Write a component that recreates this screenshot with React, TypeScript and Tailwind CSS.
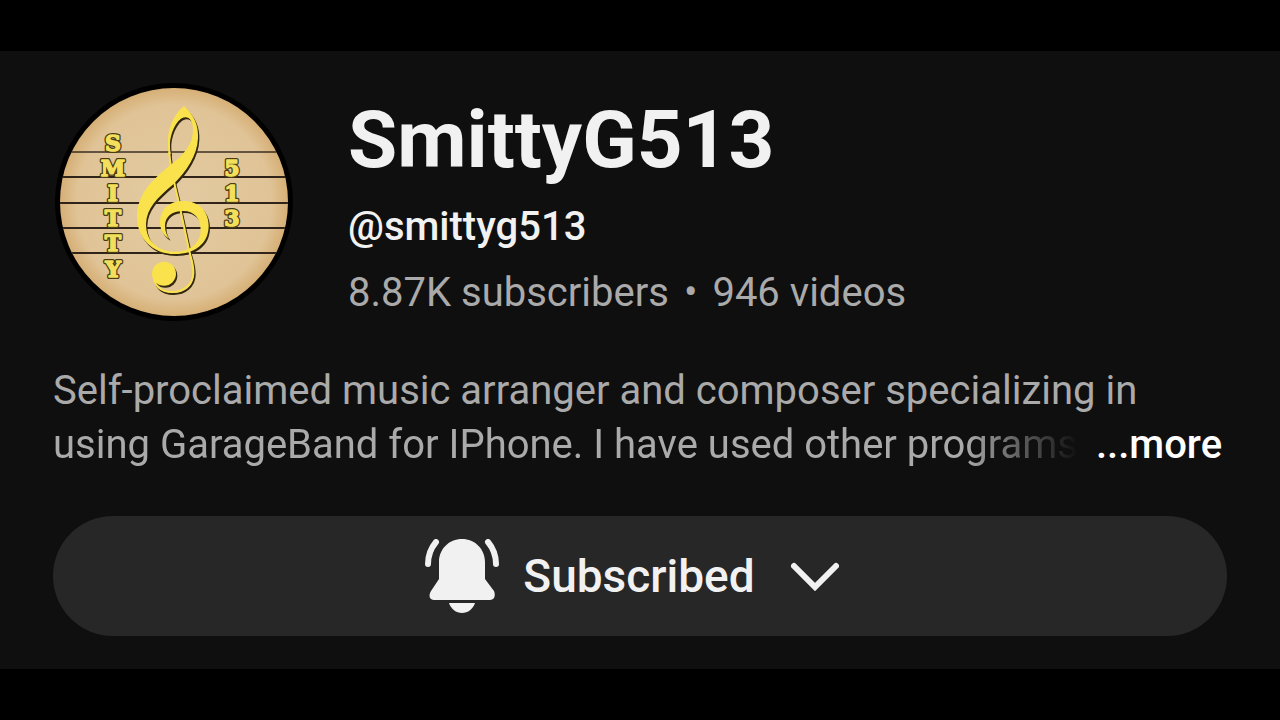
import { ReactNode } from "react";

const staffLines = [70, 95, 121, 146, 171];

const nameLetters = [
  { char: "S", y: 69 },
  { char: "M", y: 94 },
  { char: "I", y: 119 },
  { char: "T", y: 144 },
  { char: "T", y: 169 },
  { char: "Y", y: 195 },
];

const numberLetters = [
  { char: "5", y: 94 },
  { char: "1", y: 119 },
  { char: "3", y: 144 },
];

function Clef() {
  return (
    <>
      <path
        stroke="none"
        d="M432 108 C462 136 476 165 474 205 C472 255 440 305 400 343 C350 385 320 415 318 462 C318 515 355 545 405 545 C455 545 482 515 482 480 C482 445 462 423 430 423 C395 423 375 440 375 468 C375 485 381 497 388 506 C368 496 359 475 360 452 C362 415 390 393 430 393 C478 393 506 425 506 467 C506 520 465 552 405 552 C335 552 291 502 291 440 C291 375 335 330 385 290 C430 255 459 225 459 180 C459 155 450 142 436 142 C412 142 390 190 390 225 C390 238 391 245 392 252 L386 252 C384 235 383 220 384 205 C387 165 405 130 432 108 Z"
      />
      <path
        fill="none"
        strokeWidth="6"
        d="M388 245 C389 285 404 345 416 395 L446 535 C452 565 461 580 460 610 C459 645 430 666 397 666 C360 666 341 645 341 615"
      />
      <circle cx="372" cy="611" r="36" stroke="none" />
    </>
  );
}

function Letter({ x, y, char }: { x: number; y: number; char: string }) {
  return (
    <>
      <text x={x} y={y} stroke="#4a3d14" strokeWidth="4">
        {char}
      </text>
      <text x={x} y={y} fill="#f2df5c" stroke="#f2df5c" strokeWidth="1.5">
        {char}
      </text>
    </>
  );
}

function Avatar() {
  return (
    <svg viewBox="0 0 240 240" className="size-60 shrink-0" role="img" aria-label="SmittyG513">
      <defs>
        <radialGradient id="paper">
          <stop offset="0" stopColor="#e3caa1" />
          <stop offset="0.85" stopColor="#e0c497" />
          <stop offset="1" stopColor="#d6af76" />
        </radialGradient>
        <clipPath id="disc">
          <circle cx="121" cy="120" r="114" />
        </clipPath>
      </defs>
      <circle cx="121" cy="120" r="119" fill="#000" />
      <circle cx="121" cy="120" r="114" fill="url(#paper)" />
      <g clipPath="url(#disc)" stroke="#30241a" strokeWidth="2">
        {staffLines.map((y, i) => (
          <path key={y} d={`M0 ${y}H240`} opacity={i === 0 ? 0.7 : 1} />
        ))}
      </g>
      <g transform="translate(-13 -12) scale(0.33333)">
        <g transform="translate(4 6)" fill="#32270f" stroke="#32270f">
          <Clef />
        </g>
        <g fill="#fae24c" stroke="#fae24c">
          <Clef />
        </g>
      </g>
      <g className="font-['DejaVu_Serif',serif] text-[22px] font-bold" textAnchor="middle" strokeLinejoin="round">
        {nameLetters.map(({ char, y }) => (
          <Letter key={y} x={60} y={y} char={char} />
        ))}
        {numberLetters.map(({ char, y }) => (
          <Letter key={y} x={179} y={y} char={char} />
        ))}
      </g>
    </svg>
  );
}

function BellIcon() {
  return (
    <svg viewBox="0 0 74 74" className="size-[74px]" fill="currentColor" aria-hidden="true">
      <path d="M37 0 C24 0 14 10 14 23 V40 L6 52 C3 57 5 61 9 61 H65 C69 61 71 57 69 52 L60 40 V23 C60 10 50 0 37 0 Z" />
      <path d="M24 64 H50 C48 70 43 74 37 74 C31 74 26 70 24 64 Z" />
      <path
        d="M11 3 C6 9 3 16 3 25 M63 3 C68 9 71 16 71 25"
        fill="none"
        stroke="currentColor"
        strokeWidth="6"
        strokeLinecap="round"
      />
    </svg>
  );
}

function ChevronIcon() {
  return (
    <svg viewBox="0 0 48 30" className="h-[30px] w-12" aria-hidden="true">
      <path d="M3 5 L24 26 L45 5" fill="none" stroke="currentColor" strokeWidth="6" strokeLinecap="round" />
    </svg>
  );
}

function Panel({ children }: { children: ReactNode }) {
  return (
    <div className="min-h-screen bg-black py-[51px] font-[Roboto,sans-serif]">
      <main className="bg-[#0f0f0f] px-[53px] pt-[31px] pb-[33px]">{children}</main>
    </div>
  );
}

export default function App() {
  return (
    <Panel>
      <header className="flex gap-[55px]">
        <Avatar />
        <div className="flex flex-col pt-3 whitespace-nowrap">
          <h1 className="text-[80px] leading-[92px] font-bold text-[#f1f1f1]">SmittyG513</h1>
          <p className="pt-4 text-[40px] leading-[50px] font-medium text-[#f1f1f1]">@smittyg513</p>
          <p className="flex gap-[15px] pt-4 text-[40px] leading-[50px] text-[#aaaaaa]">
            <span>8.87K subscribers</span>
            <span>•</span>
            <span>946 videos</span>
          </p>
        </div>
      </header>

      <div className="pt-[42px] text-[40px] leading-[54px] whitespace-nowrap text-[#aaaaaa]">
        <p>Self-proclaimed music arranger and composer specializing in</p>
        <div className="flex gap-[18px]">
          <p className="[mask-image:linear-gradient(to_right,black_calc(100%-112px),transparent)]">
            using GarageBand for IPhone. I have used other programs
          </p>
          <button className="font-medium text-white">...more</button>
        </div>
      </div>

      <button className="mt-11 flex h-[120px] w-full items-center justify-center rounded-full bg-[#272727] pr-4 text-[#f1f1f1]">
        <BellIcon />
        <span className="pr-9 pl-6 text-[46px] leading-[54px] font-medium">Subscribed</span>
        <ChevronIcon />
      </button>
    </Panel>
  );
}
